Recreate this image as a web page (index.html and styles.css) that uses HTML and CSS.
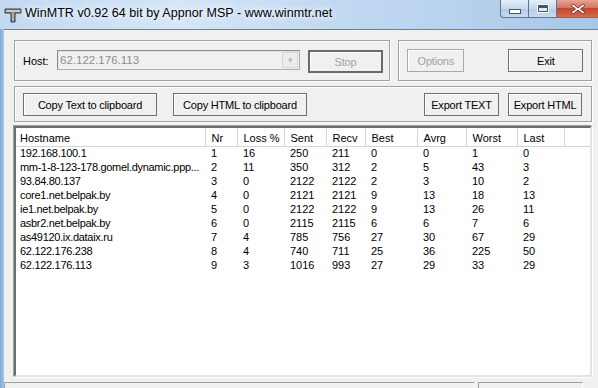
FILE: index.html
```html
<!DOCTYPE html>
<html>
<head>
  <meta charset="utf-8">
  <title>WinMTR</title>
  <link rel="stylesheet" href="styles.css">
</head>
<body>
<div class="window">
  <div class="titlebar">
    <svg class="appicon" width="18" height="16" viewBox="0 0 18 16">
      <path d="M1 2h16v4h-6v9H7V6H1z" fill="#8a8a8a" stroke="#3a3a3a" stroke-width="1"/>
      <path d="M2 3h14v2H2z" fill="#c8c8c8"/>
      <path d="M8 6h2v8H8z" fill="#b0b0b0"/>
    </svg>
    <span class="title">WinMTR v0.92 64 bit by Appnor MSP - www.winmtr.net</span>
    <div class="captions">
      <div class="cap min"><span class="bar"></span></div>
      <div class="cap max"><span class="box"></span></div>
      <div class="cap close">
        <svg width="16" height="12" viewBox="0 0 16 12">
          <path d="M3 1l5 4 5-4 2 1.5-4.5 3.5 4.5 3.5-2 1.5-5-4-5 4-2-1.5 4.5-3.5L1 2.5z" fill="#fff" stroke="#5a1f1f" stroke-width="0.8"/>
        </svg>
      </div>
    </div>
  </div>

  <div class="client">
    <div class="row">
      <div class="group host-group">
        <span class="label">Host:</span>
        <div class="combo">
          <span class="combo-text">62.122.176.113</span>
          <span class="combo-btn">&#9662;</span>
        </div>
        <button class="btn default" disabled>Stop</button>
      </div>
      <div class="group opt-group">
        <button class="btn small" disabled>Options</button>
        <button class="btn">Exit</button>
      </div>
    </div>

    <div class="group tools">
      <button class="btn wide">Copy Text to clipboard</button>
      <button class="btn wide">Copy HTML to clipboard</button>
      <span class="spacer"></span>
      <button class="btn">Export TEXT</button>
      <button class="btn">Export HTML</button>
    </div>

    <div class="listview">
      <table class="report">
        <colgroup>
          <col class="c-host"><col class="c-nr"><col class="c-loss"><col class="c-sent"><col class="c-recv">
          <col class="c-best"><col class="c-avrg"><col class="c-worst"><col class="c-last"><col>
        </colgroup>
        <thead>
          <tr><th>Hostname</th><th>Nr</th><th>Loss %</th><th>Sent</th><th>Recv</th><th>Best</th><th>Avrg</th><th>Worst</th><th>Last</th><th class="rest"></th></tr>
        </thead>
        <tbody>
          <tr><td>192.168.100.1</td><td>1</td><td>16</td><td>250</td><td>211</td><td>0</td><td>0</td><td>1</td><td>0</td><td></td></tr>
          <tr><td>mm-1-8-123-178.gomel.dynamic.ppp...</td><td>2</td><td>11</td><td>350</td><td>312</td><td>2</td><td>5</td><td>43</td><td>3</td><td></td></tr>
          <tr><td>93.84.80.137</td><td>3</td><td>0</td><td>2122</td><td>2122</td><td>2</td><td>3</td><td>10</td><td>2</td><td></td></tr>
          <tr><td>core1.net.belpak.by</td><td>4</td><td>0</td><td>2121</td><td>2121</td><td>9</td><td>13</td><td>18</td><td>13</td><td></td></tr>
          <tr><td>ie1.net.belpak.by</td><td>5</td><td>0</td><td>2122</td><td>2122</td><td>9</td><td>13</td><td>26</td><td>11</td><td></td></tr>
          <tr><td>asbr2.net.belpak.by</td><td>6</td><td>0</td><td>2115</td><td>2115</td><td>6</td><td>6</td><td>7</td><td>6</td><td></td></tr>
          <tr><td>as49120.ix.dataix.ru</td><td>7</td><td>4</td><td>785</td><td>756</td><td>27</td><td>30</td><td>67</td><td>29</td><td></td></tr>
          <tr><td>62.122.176.238</td><td>8</td><td>4</td><td>740</td><td>711</td><td>25</td><td>36</td><td>225</td><td>50</td><td></td></tr>
          <tr><td>62.122.176.113</td><td>9</td><td>3</td><td>1016</td><td>993</td><td>27</td><td>29</td><td>33</td><td>29</td><td></td></tr>
        </tbody>
      </table>
    </div>

    <div class="statusbar">
      <div class="panel main">Waiting for last packets to return...</div>
      <div class="panel side"></div>
    </div>
  </div>
</div>
</body>
</html>
```

FILE: styles.css
```css
html, body {margin: 0; padding: 0;}
body {width: 598px; height: 388px; overflow: hidden; background: #f0f0f0;
  font-family: "Liberation Sans", Arial, sans-serif; font-size: 11px; color: #000;}

.window {width: 598px; height: 388px; display: flex; flex-direction: column;
  background: linear-gradient(90deg, #7ea8d6 0, #a9c7e8 4px, #a9c7e8 100%);}

/* title bar (aero glass) */
.titlebar {height: 29px; flex: none; display: flex; align-items: flex-start; position: relative;
  background: linear-gradient(90deg, #c3d9f1 0%, #d4e6f8 30%, #c2d9f2 55%, #b9d2ee 75%, #a9c6e6 100%);}
.appicon {margin: 7px 0 0 4px;}
.title {margin: 6px 0 0 3px; font-size: 12.5px; letter-spacing: 0.05px; color: #000;
  text-shadow: 0 0 6px #fff, 0 0 8px #fff;}
.captions {position: absolute; top: 0; right: 0; display: flex;}
.cap {height: 18px; display: flex; align-items: center; justify-content: center;
  border: 1px solid #5d7693; border-top: none; box-sizing: border-box;}
.min {width: 28px; border-radius: 0 0 0 4px; border-right: none;
  background: linear-gradient(#e4eef9, #c7d9ee 50%, #b3cae5 51%, #c8dbf0);}
.max {width: 28px; border-right: none;
  background: linear-gradient(#e4eef9, #c7d9ee 50%, #b3cae5 51%, #c8dbf0);}
.close {width: 42px; border-right: none;
  background: linear-gradient(#e8a493, #d27860 45%, #c2462c 50%, #d36a4d);}
.bar {display: block; width: 10px; height: 3px; margin-top: 6px; background: #fff; border: 1px solid #3e5670;}
.box {display: block; width: 8px; height: 5px; border: 1px solid #3e5670; outline: 1px solid #fff;
  background: #dfe9f5; box-shadow: inset 0 2px 0 #3e5670;}

/* dialog client area */
.client {flex: 1; margin-left: 4px; background: #f0f0f0; border-top: 1px solid #6b829d;
  padding: 10px 6px 0 10px; display: flex; flex-direction: column; box-sizing: border-box;}
.row {display: flex; gap: 8px; height: 41px;}
.group {border: 1px solid #a0a0a0; box-shadow: inset 1px 1px 0 #fff, 1px 1px 0 #fff;
  display: flex; align-items: center; box-sizing: border-box;}
.host-group {width: 377px; padding: 0 0 0 8px;}
.opt-group {width: 194px; padding-left: 8px;}
.tools {height: 36px; margin-top: 5px; width: 578px; padding: 0 9px 0 8px;}
.spacer {flex: 1;}

.label {width: 34px;}
.combo {width: 243px; height: 20px; box-sizing: border-box; display: flex; align-items: center;
  border: 1px solid #acacac; border-top-color: #8a8a8a; border-left-color: #8a8a8a;
  box-shadow: inset 1px 1px 0 #e0e0e0; background: #f0f0f0; margin-top: -2px;}
.combo-text {flex: 1; padding-left: 2px; color: #8d8d8d; font-size: 11.5px;}
.combo-btn {width: 16px; height: 16px; margin-right: 1px; background: #ececec; border: 1px solid #d6d6d6;
  box-sizing: border-box; color: #b9b9b9; font-size: 9px; text-align: center; line-height: 14px;}

.btn {font-family: inherit; font-size: 11px; letter-spacing: -0.2px; height: 23px; width: 75px; padding: 0;
  background: #f0f0f0; color: #000; border: 1px solid #6f6f6f; box-shadow: inset 1px 1px 0 #fff;
  margin: 0;}
.btn:disabled {color: #a3a3a3; border-color: #a9a9a9;}
.btn.default {border: 2px solid #6a6a6a; margin-left: 8px; margin-top: 2px;}
.btn.small {width: 57px; margin-right: 44px;}
.btn.wide {width: 134px; margin-right: 16px;}
.tools .btn + .btn:last-child {margin-left: 9px; width: 74px;}
.tools .btn {margin-top: 1px;}

/* list view */
.listview {margin-top: 4px; width: 578px; height: 251px; box-sizing: border-box; background: #fff;
  border: 2px solid; border-color: #6d6d6d #e3e3e3 #e3e3e3 #6d6d6d;
  box-shadow: -1px -1px 0 #a0a0a0, 1px 1px 0 #fff; overflow: hidden;}
.report {border-collapse: collapse; table-layout: fixed; width: 576px;}
.c-host {width: 189px;} .c-nr {width: 32px;} .c-loss {width: 47px;} .c-sent {width: 42px;}
.c-recv {width: 39px;} .c-best {width: 52px;} .c-avrg {width: 49px;} .c-worst {width: 51px;}
.c-last {width: 47px;}
.report th {font-weight: normal; text-align: left; height: 18px; padding: 2px 0 0 6px; box-sizing: border-box;
  border-right: 1px solid #d5d5d5; border-bottom: 1px solid #d5d5d5; background: #fff;
  font-size: 11px; vertical-align: middle;}
.report th:first-child {padding-left: 4px;}
.report th.rest {border-right: none;}
.report tbody tr {height: 14px;}
.report td {height: 14px; padding: 0 0 0 6px; white-space: nowrap; overflow: hidden;
  font-size: 11px; line-height: 13px;}
.report td:first-child {padding-left: 4px; letter-spacing: -0.3px;}

/* status bar */
.statusbar {display: flex; margin-top: 5px; height: 20px; gap: 3px;}
.panel {border: 1px solid #a0a0a0; border-right-color: #fff; border-bottom-color: #fff;
  box-sizing: border-box; height: 20px;}
.main {width: 471px; margin-left: -10px; padding: 3px 0 0 6px; font-size: 11px;}
.side {width: 105px;}
```
